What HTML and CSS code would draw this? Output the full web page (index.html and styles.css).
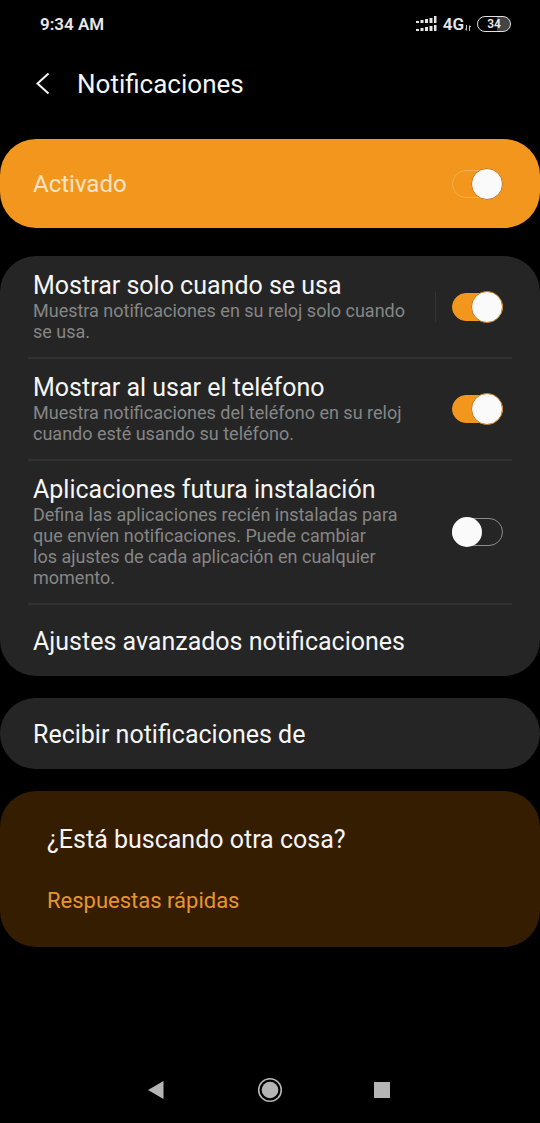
FILE: index.html
```html
<!DOCTYPE html>
<html lang="es">
<head>
<meta charset="utf-8">
<meta name="viewport" content="width=device-width, initial-scale=1">
<title>Notificaciones</title>
<link rel="stylesheet" href="styles.css">
</head>
<body>
<div class="screen">
  <div class="status">
    <span class="status-time">9:34 AM</span>
    <div class="status-icons">
      <svg class="signal" width="21" height="16" viewBox="0 0 21 16" fill="#e4e4e4" aria-hidden="true">
        <path d="M0 5h3v2H0zM4.500 4h3v3h-3zM9 3h3v4H9zM13.500 2h3v5h-3zM18 0h2.500v7H18zM0 13h3v2H0zM4.500 12h3v3h-3zM9 11h3v4H9zM13.500 10h3v5h-3zM18 9h2.500v6H18z"/>
      </svg>
      <span class="network">4G</span>
      <svg class="data" width="6" height="6" viewBox="0 0 6 6" fill="none" stroke="#bdbdbd" aria-hidden="true">
        <path d="M1.5 0v5M0 3.5l1.5 2M4.5 6V1M4.5 .5L6 2"/>
      </svg>
      <span class="battery">34</span>
    </div>
  </div>

  <header class="header">
    <button class="back" type="button" aria-label="Atrás">
      <svg width="14" height="22" viewBox="0 0 14 22" fill="none" stroke="#f5f5f5" stroke-width="2" aria-hidden="true"><path d="M12.500 .5L1.500 10.500L12.500 20.500"/></svg>
    </button>
    <h1 class="title">Notificaciones</h1>
  </header>

  <main class="cards">
    <section class="card master">
      <label class="master-label" for="enabled">Activado</label>
      <input class="switch switch-plain" id="enabled" type="checkbox" role="switch" checked>
    </section>

    <section class="card settings">
      <div class="row">
        <div class="row-text">
          <label class="row-title" for="in-use">Mostrar solo cuando se usa</label>
          <p class="row-note">Muestra notificaciones en su reloj solo cuando<br>se usa.</p>
        </div>
        <span class="divider"></span>
        <input class="switch" id="in-use" type="checkbox" role="switch" checked>
      </div>
      <div class="row">
        <div class="row-text">
          <label class="row-title" for="phone">Mostrar al usar el teléfono</label>
          <p class="row-note">Muestra notificaciones del teléfono en su reloj<br>cuando esté usando su teléfono.</p>
        </div>
        <input class="switch" id="phone" type="checkbox" role="switch" checked>
      </div>
      <div class="row">
        <div class="row-text">
          <label class="row-title" for="future">Aplicaciones futura instalación</label>
          <p class="row-note">Defina las aplicaciones recién instaladas para<br>que envíen notificaciones. Puede cambiar<br>los ajustes de cada aplicación en cualquier<br>momento.</p>
        </div>
        <input class="switch" id="future" type="checkbox" role="switch">
      </div>
      <button class="entry" type="button">Ajustes avanzados notificaciones</button>
    </section>

    <section class="card">
      <button class="entry" type="button">Recibir notificaciones de</button>
    </section>

    <section class="card more">
      <h2 class="more-title">¿Está buscando otra cosa?</h2>
      <a class="more-link" href="#respuestas">Respuestas rápidas</a>
    </section>
  </main>

  <nav class="navbar" aria-label="Sistema">
    <button class="nav-button" type="button" aria-label="Volver">
      <svg width="26" height="26" viewBox="0 0 26 26" fill="#b5b5b5" aria-hidden="true"><path d="M3 13L18.500 4v18z"/></svg>
    </button>
    <button class="nav-button" type="button" aria-label="Inicio">
      <svg width="26" height="26" viewBox="0 0 26 26" aria-hidden="true"><circle cx="13" cy="13" r="11.300" fill="none" stroke="#b5b5b5" stroke-width="1.600"/><circle cx="13" cy="13" r="8.300" fill="#b5b5b5"/></svg>
    </button>
    <button class="nav-button" type="button" aria-label="Recientes">
      <svg width="26" height="26" viewBox="0 0 26 26" fill="#b5b5b5" aria-hidden="true"><path d="M5 5h16v16H5z"/></svg>
    </button>
  </nav>
</div>
</body>
</html>
```
FILE: styles.css
```css
* {
  box-sizing: border-box;
}

body {
  margin: 0;
  background: #000;
  color: #f5f5f5;
  font-family: Roboto, "Noto Sans", sans-serif;
}

button {
  margin: 0;
  padding: 0;
  border: 0;
  background: none;
  color: inherit;
  font: inherit;
}

.screen {
  display: flex;
  flex-direction: column;
  min-height: 100vh;
}

.status {
  display: flex;
  align-items: center;
  justify-content: space-between;
  height: 48px;
  padding: 0 29px 0 40px;
  color: #e8e8e8;
  font-weight: 600;
}

.status-time {
  font-size: 17px;
}

.status-icons {
  display: flex;
  align-items: center;
}

.network {
  margin-left: 6px;
  font-size: 17px;
}

.data {
  align-self: flex-end;
  margin: 0 6px 3px 1px;
}

.battery {
  width: 34px;
  border: 1px solid #e0e0e0;
  border-radius: 8px;
  background: linear-gradient(90deg, #000 58%, #444 58%);
  font-size: 12px;
  line-height: 14px;
  text-align: center;
}

.header {
  display: flex;
  align-items: center;
  gap: 27px;
  height: 72px;
  padding: 0 36px;
}

.back {
  display: flex;
}

.title {
  margin: 0;
  font-size: 26px;
  font-weight: 400;
  line-height: 30px;
}

.cards {
  display: flex;
  flex-direction: column;
  gap: 22px;
  padding-top: 19px;
}

.card {
  overflow: hidden;
  border-radius: 36px;
  background: #252525;
}

.master {
  display: flex;
  align-items: center;
  justify-content: space-between;
  height: 89px;
  margin-bottom: 6px;
  padding: 0 37px 0 33px;
  background: #f2961e;
}

.master-label {
  color: #fce4c3;
  font-size: 24px;
}

.settings {
  padding-top: 1px;
}

.row {
  display: flex;
  align-items: center;
  margin: 0 28px;
  padding: 14px 9px 15px 5px;
  border-bottom: 2px solid #313131;
}

.row-text {
  flex: 1;
}

.row-title {
  display: block;
  font-size: 25px;
  line-height: 29px;
}

.row-note {
  margin: 0;
  color: #868686;
  font-size: 18px;
  line-height: 21px;
}

.divider {
  width: 1px;
  height: 30px;
  margin-right: 16px;
  background: #343434;
}

.switch {
  display: flex;
  align-items: center;
  flex: none;
  width: 51px;
  height: 28px;
  margin: 0;
  border: 1px solid #8c8c8c;
  border-radius: 14px;
  background: transparent;
  appearance: none;
}

.switch::before {
  content: "";
  flex: none;
  width: 30px;
  height: 30px;
  margin-left: -1px;
  border-radius: 50%;
  background: #fafafa;
}

.switch:checked {
  justify-content: flex-end;
  border-color: #f2961e;
  background: #f2961e;
}

.switch:checked::before {
  margin: 0 -1px 0 0;
  border: 1px solid #c77a1c;
}

.switch-plain:checked {
  border-color: #f6ad4c;
}

.entry {
  display: block;
  width: 100%;
  padding: 22px 33px 20px;
  font-size: 25px;
  line-height: 29px;
  text-align: left;
}

.more {
  padding: 34px 47px 32px;
  background: #341d00;
}

.more-title {
  margin: 0;
  font-size: 25px;
  font-weight: 400;
  line-height: 29px;
}

.more-link {
  display: block;
  margin-top: 33px;
  color: #e8962a;
  font-size: 22px;
  line-height: 28px;
  text-decoration: none;
}

.navbar {
  display: flex;
  justify-content: center;
  gap: 86px;
  margin-top: auto;
  padding: 20px 0;
}

.nav-button {
  display: flex;
}
```
